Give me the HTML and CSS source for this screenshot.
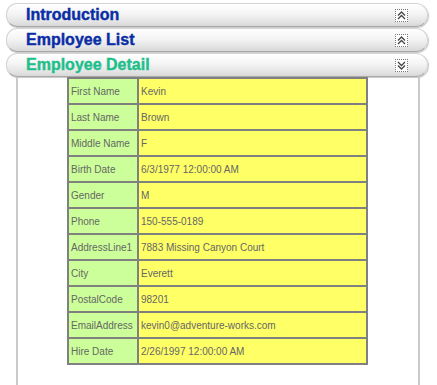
FILE: index.html
```html
<!DOCTYPE html>
<html lang="en">
<head>
    <meta charset="UTF-8">
    <title>Employee Detail</title>
    <link rel="stylesheet" href="styles.css">
</head>
<body>

<div class="accordion">
    <div class="pane-header">
        <span class="pane-title">Introduction</span>
        <span class="toggle">
            <svg width="11" height="11" viewBox="0 0 11 11"><path d="M2 5.5 L5.5 2 L9 5.5 M2 9 L5.5 5.5 L9 9" fill="none" stroke="#444" stroke-width="1.3"/></svg>
        </span>
    </div>
    <div class="pane-header">
        <span class="pane-title">Employee List</span>
        <span class="toggle">
            <svg width="11" height="11" viewBox="0 0 11 11"><path d="M2 5.5 L5.5 2 L9 5.5 M2 9 L5.5 5.5 L9 9" fill="none" stroke="#444" stroke-width="1.3"/></svg>
        </span>
    </div>
    <div class="pane-header selected">
        <span class="pane-title">Employee Detail</span>
        <span class="toggle">
            <svg width="11" height="11" viewBox="0 0 11 11"><path d="M2 2 L5.5 5.5 L9 2 M2 5.5 L5.5 9 L9 5.5" fill="none" stroke="#444" stroke-width="1.3"/></svg>
        </span>
    </div>
    <div class="pane-content">
        <table class="detail">
            <tr><td class="label">First Name</td><td class="value">Kevin</td></tr>
            <tr><td class="label">Last Name</td><td class="value">Brown</td></tr>
            <tr><td class="label">Middle Name</td><td class="value">F</td></tr>
            <tr><td class="label">Birth Date</td><td class="value">6/3/1977 12:00:00 AM</td></tr>
            <tr><td class="label">Gender</td><td class="value">M</td></tr>
            <tr><td class="label">Phone</td><td class="value">150-555-0189</td></tr>
            <tr><td class="label">AddressLine1</td><td class="value">7883 Missing Canyon Court</td></tr>
            <tr><td class="label">City</td><td class="value">Everett</td></tr>
            <tr><td class="label">PostalCode</td><td class="value">98201</td></tr>
            <tr><td class="label">EmailAddress</td><td class="value">kevin0@adventure-works.com</td></tr>
            <tr><td class="label">Hire Date</td><td class="value">2/26/1997 12:00:00 AM</td></tr>
        </table>
    </div>
</div>

</body>
</html>
```
FILE: styles.css
```css
body {
    margin: 0;
    padding: 3px 0 0 6px;
    font-family: "Liberation Sans", Arial, sans-serif;
    background: #fff;
}
.accordion {
    width: 422px;
}
.pane-header {
    display: flex;
    align-items: center;
    justify-content: space-between;
    height: 24px;
    margin-bottom: 1px;
    padding: 0 19px 0 19px;
    border: 1px solid #d4d4d4;
    border-bottom-color: #a8a8a8;
    border-radius: 12px 13px 13px 12px;
    background: linear-gradient(to bottom, #ffffff 0%, #f4f4f4 45%, #e4e4e4 80%, #d8d8d8 100%);
    box-shadow: 1px 1px 1px #c8c8c8;
    box-sizing: border-box;
}
.pane-title {
    font-size: 16px;
    font-weight: bold;
    color: #0a2da6;
    -webkit-text-stroke: 0.4px #0a2da6;
}
.selected .pane-title {
    color: #1fbf8c;
    -webkit-text-stroke-color: #1fbf8c;
}
.toggle {
    display: flex;
    align-items: center;
    justify-content: center;
    width: 11px;
    height: 11px;
    border: 1px dotted #777;
    background: #fff;
}
.pane-content {
    margin: -1px 0 0 10px;
    width: 400px;
    height: 320px;
    border-left: 2px solid #cacaca;
    border-right: 2px solid #cacaca;
}
.detail {
    margin-left: 49px;
    width: 301px;
    border-collapse: collapse;
    border: 2px solid #808080;
    font-size: 10px;
    color: #666;
}
.detail td {
    height: 24px;
    padding: 0 0 0 2px;
    border: 2px solid #808080;
}
.label {
    width: 66px;
    background: #ccff99;
}
.value {
    background: #ffff66;
}
```
